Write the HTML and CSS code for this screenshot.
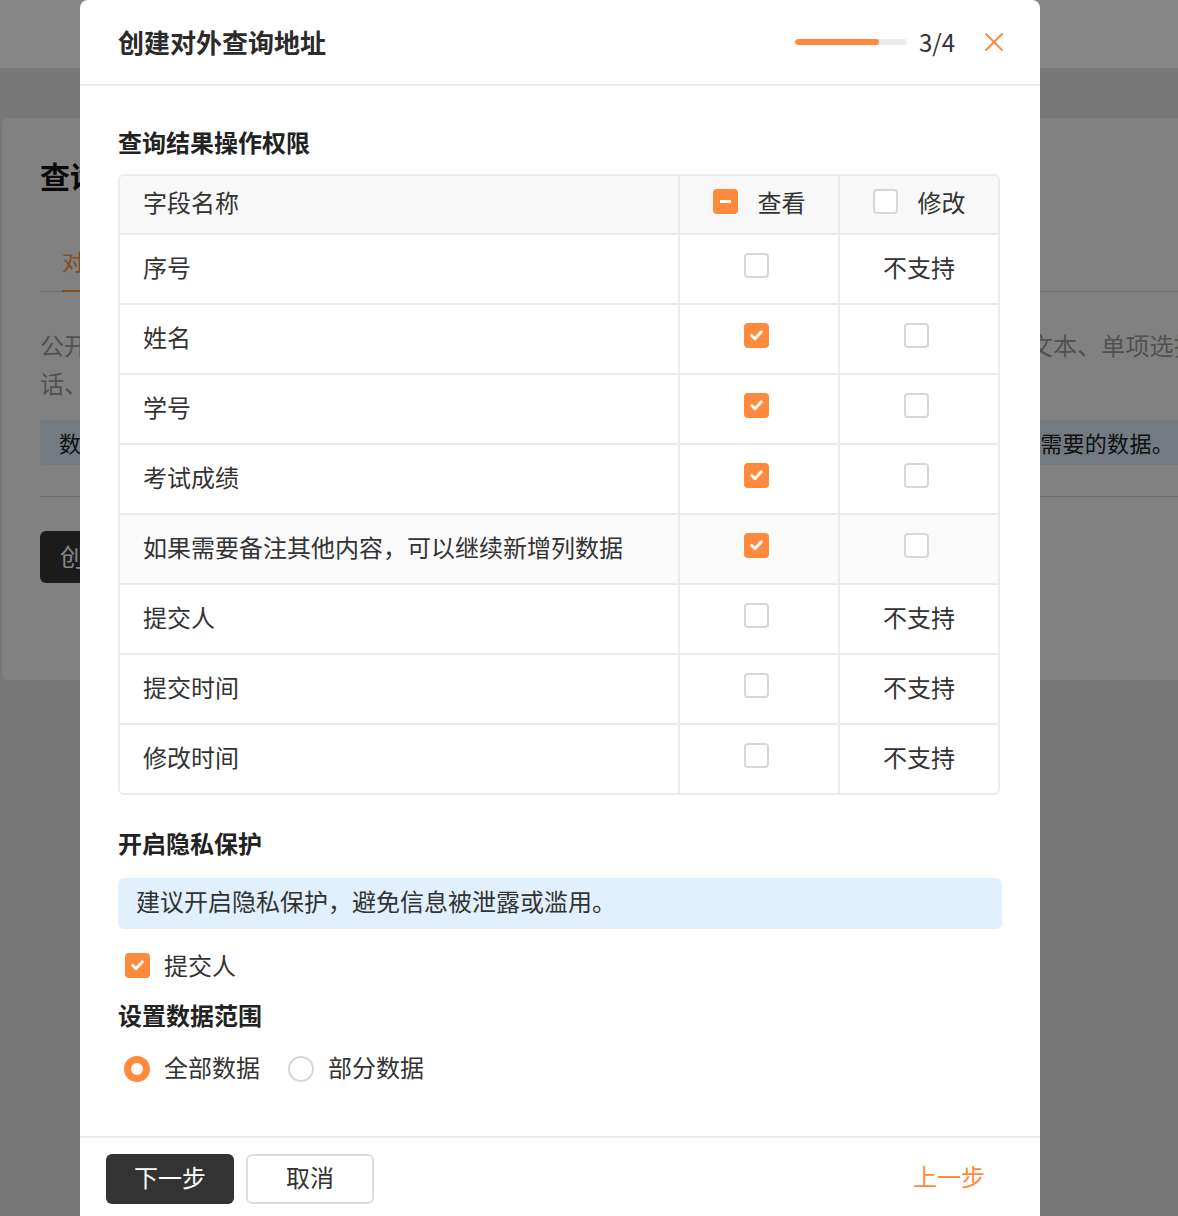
FILE: index.html
```html
<!DOCTYPE html>
<html lang="zh-CN">
  <head>
    <meta charset="utf-8">
    <title>创建对外查询地址</title>
    <link rel="stylesheet" href="styles.css">
  </head>
  <body>
    <!-- page behind the dialog -->
    <div class="topbar"></div>
    <div class="card">
      <h1 class="card-title">查询设置</h1>
      <div class="tabs">
        <span class="tab active">对外查询</span>
      </div>
      <div class="desc first">公开查询地址可以让填写者在表单外部查询提交的数据，支持作为查询条件的字段包括：单行文本、单项选择、下拉框、手机号、电</div>
      <div class="desc">话、身份证号等字段，查询结果的展示字段可单独设置。</div>
      <div class="notice">数据查询结果按照设置的权限进行展示，请根据实际需要配置查询字段，确保填写者只能查看到自己需要的数据。</div>
      <div class="divider"></div>
      <button class="dark-btn">创建对外查询地址</button>
    </div>

    <div class="mask"></div>

    <div class="modal">
      <div class="modal-header">
        <div class="modal-title">创建对外查询地址</div>
        <div class="progress"><div class="progress-fill" style="width: 75%"></div></div>
        <div class="step">3/4</div>
        <svg class="close" viewBox="0 0 20 20" width="20" height="20">
          <path d="M1.5 1.5L18.5 18.5M18.5 1.5L1.5 18.5" stroke="#ff8a3d" stroke-width="2" fill="none"/>
        </svg>
      </div>

      <div class="modal-body">
        <div class="section-title">查询结果操作权限</div>

        <div class="perm-table">
          <div class="perm-row head">
            <div class="cell name">字段名称</div>
            <div class="cell center">
              <span class="checkbox checked"><span class="dash"></span></span>
              <span class="head-label">查看</span>
            </div>
            <div class="cell center">
              <span class="checkbox"></span>
              <span class="head-label">修改</span>
            </div>
          </div>

          <div class="perm-row">
            <div class="cell name">序号</div>
            <div class="cell center"><span class="checkbox"></span></div>
            <div class="cell center">不支持</div>
          </div>
          <div class="perm-row">
            <div class="cell name">姓名</div>
            <div class="cell center"><span class="checkbox checked"><svg viewBox="0 0 24 24"><path d="M6.5 12.5l3.8 3.8 7.2-8"/></svg></span></div>
            <div class="cell center"><span class="checkbox"></span></div>
          </div>
          <div class="perm-row">
            <div class="cell name">学号</div>
            <div class="cell center"><span class="checkbox checked"><svg viewBox="0 0 24 24"><path d="M6.5 12.5l3.8 3.8 7.2-8"/></svg></span></div>
            <div class="cell center"><span class="checkbox"></span></div>
          </div>
          <div class="perm-row">
            <div class="cell name">考试成绩</div>
            <div class="cell center"><span class="checkbox checked"><svg viewBox="0 0 24 24"><path d="M6.5 12.5l3.8 3.8 7.2-8"/></svg></span></div>
            <div class="cell center"><span class="checkbox"></span></div>
          </div>
          <div class="perm-row hover">
            <div class="cell name">如果需要备注其他内容，可以继续新增列数据</div>
            <div class="cell center"><span class="checkbox checked"><svg viewBox="0 0 24 24"><path d="M6.5 12.5l3.8 3.8 7.2-8"/></svg></span></div>
            <div class="cell center"><span class="checkbox"></span></div>
          </div>
          <div class="perm-row">
            <div class="cell name">提交人</div>
            <div class="cell center"><span class="checkbox"></span></div>
            <div class="cell center">不支持</div>
          </div>
          <div class="perm-row">
            <div class="cell name">提交时间</div>
            <div class="cell center"><span class="checkbox"></span></div>
            <div class="cell center">不支持</div>
          </div>
          <div class="perm-row">
            <div class="cell name">修改时间</div>
            <div class="cell center"><span class="checkbox"></span></div>
            <div class="cell center">不支持</div>
          </div>
        </div>

        <div class="section-title privacy-title">开启隐私保护</div>
        <div class="info-box">建议开启隐私保护，避免信息被泄露或滥用。</div>
        <label class="option check-option">
          <span class="checkbox checked"><svg viewBox="0 0 24 24"><path d="M6.5 12.5l3.8 3.8 7.2-8"/></svg></span>
          <span>提交人</span>
        </label>

        <div class="section-title range-title">设置数据范围</div>
        <div class="radio-group">
          <label class="option">
            <span class="radio checked"></span>
            <span>全部数据</span>
          </label>
          <label class="option">
            <span class="radio"></span>
            <span>部分数据</span>
          </label>
        </div>
      </div>

      <div class="modal-footer">
        <button class="btn btn-primary">下一步</button>
        <button class="btn btn-default">取消</button>
        <a class="btn-link">上一步</a>
      </div>
    </div>
  </body>
</html>
```

FILE: styles.css
```css
* {
  box-sizing: border-box;
  margin: 0;
  padding: 0;
}

html,
body {
  height: 1216px;
  overflow: hidden;
}

body {
  position: relative;
  background: #e3e3e3;
  color: #333;
  font-family: "Noto Sans CJK SC", "Noto Sans", sans-serif;
}

/* background page */

.topbar {
  height: 68px;
  background: #fff;
}

.card {
  width: 1220px;
  height: 562px;
  margin: 50px 0 0 2px;
  padding: 37px 0 0 38px;
  background: #f4f4f4;
  border-radius: 6px;
}

.card-title {
  font-size: 30px;
  font-weight: 700;
  line-height: 40px;
  color: #111;
}

.tabs {
  margin-top: 49px;
  padding-left: 22px;
  border-bottom: 1px solid #cfcfcf;
}

.tab {
  display: inline-block;
  margin-bottom: -1px;
  padding-bottom: 14px;
  font-size: 22px;
  line-height: 32px;
  color: #ff8a3d;
  border-bottom: 2px solid #ff8a3d;
}

.desc {
  font-size: 24px;
  line-height: 38px;
  letter-spacing: 0.12px;
  color: #9a9a9a;
  white-space: nowrap;
}

.desc.first {
  margin-top: 34px;
}

.notice {
  height: 45px;
  margin-top: 18px;
  padding-left: 19px;
  font-size: 22px;
  line-height: 44px;
  letter-spacing: 0.3px;
  color: #222;
  background: #dbe7f4;
  border-radius: 4px;
  white-space: nowrap;
}

.divider {
  margin-top: 31px;
  border-top: 1px solid #cfcfcf;
}

.dark-btn {
  height: 52px;
  margin-top: 34px;
  padding: 0 20px 4px;
  border: none;
  border-radius: 6px;
  background: #333;
  color: #fff;
  font-family: inherit;
  font-size: 24px;
}

.mask {
  position: absolute;
  top: 0;
  left: 0;
  right: 0;
  bottom: 0;
  background: rgba(0, 0, 0, 0.47);
}

/* dialog */

.modal {
  position: absolute;
  top: 0;
  left: 80px;
  width: 960px;
  height: 1260px;
  background: #fff;
  border-radius: 8px 8px 0 0;
}

.modal-header {
  display: flex;
  align-items: center;
  height: 86px;
  padding: 0 36px 2px 38px;
  border-bottom: 2px solid #ebebeb;
}

.modal-title {
  flex: 1;
  font-size: 26px;
  font-weight: 600;
  color: #2b2b2b;
}

.progress {
  width: 112px;
  height: 6px;
  margin-top: 2px;
  background: #ebebeb;
  border-radius: 3px;
  overflow: hidden;
}

.progress-fill {
  height: 100%;
  background: #ff8a3d;
  border-radius: 3px;
}

.step {
  margin-left: 12px;
  font-size: 24px;
  color: #333;
}

.close {
  margin: 2px 0 0 29px;
}

.modal-body {
  padding: 40px 38px 53px 38px;
}

.section-title {
  font-size: 24px;
  font-weight: 600;
  line-height: 32px;
  color: #222;
}

.perm-table {
  width: 882px;
  margin-top: 16px;
  border: 2px solid #ebebeb;
  border-radius: 6px;
  overflow: hidden;
}

.perm-row {
  display: grid;
  grid-template-columns: 1fr 160px 160px;
  height: 70px;
  border-top: 2px solid #ebebeb;
  font-size: 24px;
}

.perm-row.head {
  height: 57px;
  border-top: none;
  background: #f8f8f8;
}

.perm-row.hover {
  background: #fafafa;
}

.cell {
  display: flex;
  align-items: center;
  padding-bottom: 6px;
}

.cell + .cell {
  border-left: 2px solid #ebebeb;
}

.cell.name {
  padding-left: 23px;
}

.cell.center {
  justify-content: center;
}

.perm-row:not(.head) .cell.center .checkbox {
  margin: -2px 6px 0 0;
}

.head-label {
  margin-left: 20px;
}

.checkbox {
  display: inline-flex;
  align-items: center;
  justify-content: center;
  flex-shrink: 0;
  width: 25px;
  height: 25px;
  border: 2px solid #d7d7d7;
  border-radius: 4px;
  background: #fff;
}

.checkbox.checked {
  border-color: #ff8a3d;
  background: #ff8a3d;
}

.checkbox svg {
  width: 22px;
  height: 22px;
}

.checkbox svg path {
  fill: none;
  stroke: #fff;
  stroke-width: 3.4;
  stroke-linecap: round;
  stroke-linejoin: round;
}

.checkbox .dash {
  width: 11px;
  height: 3px;
  background: #fff;
}

.privacy-title {
  margin-top: 32px;
}

.info-box {
  height: 51px;
  margin-top: 19px;
  padding-left: 18px;
  font-size: 24px;
  line-height: 46px;
  color: #333;
  background: #e1f0fc;
  border-radius: 6px;
}

.option {
  display: inline-flex;
  align-items: center;
  gap: 14px;
  font-size: 24px;
  line-height: 32px;
  color: #333;
}

.check-option {
  margin-top: 20px;
  padding-left: 7px;
}

.range-title {
  margin-top: 18px;
}

.radio-group {
  display: flex;
  gap: 28px;
  margin-top: 20px;
  padding-left: 6px;
}

.radio {
  width: 26px;
  height: 26px;
  margin-top: 3px;
  border: 2px solid #d5d5d5;
  border-radius: 50%;
  background: #fff;
}

.radio.checked {
  border: 7px solid #ff8a3d;
}

.modal-footer {
  display: flex;
  align-items: flex-start;
  padding: 16px 55px 0 26px;
  border-top: 2px solid #ebebeb;
}

.btn {
  width: 128px;
  height: 50px;
  padding-bottom: 6px;
  border-radius: 6px;
  font-family: inherit;
  font-size: 24px;
}

.btn-primary {
  border: none;
  background: #333;
  color: #fff;
}

.btn-default {
  margin-left: 12px;
  border: 2px solid #dedede;
  background: #fff;
  color: #333;
}

.btn-link {
  margin-left: auto;
  font-size: 24px;
  line-height: 44px;
  color: #ff8a3d;
}
```
